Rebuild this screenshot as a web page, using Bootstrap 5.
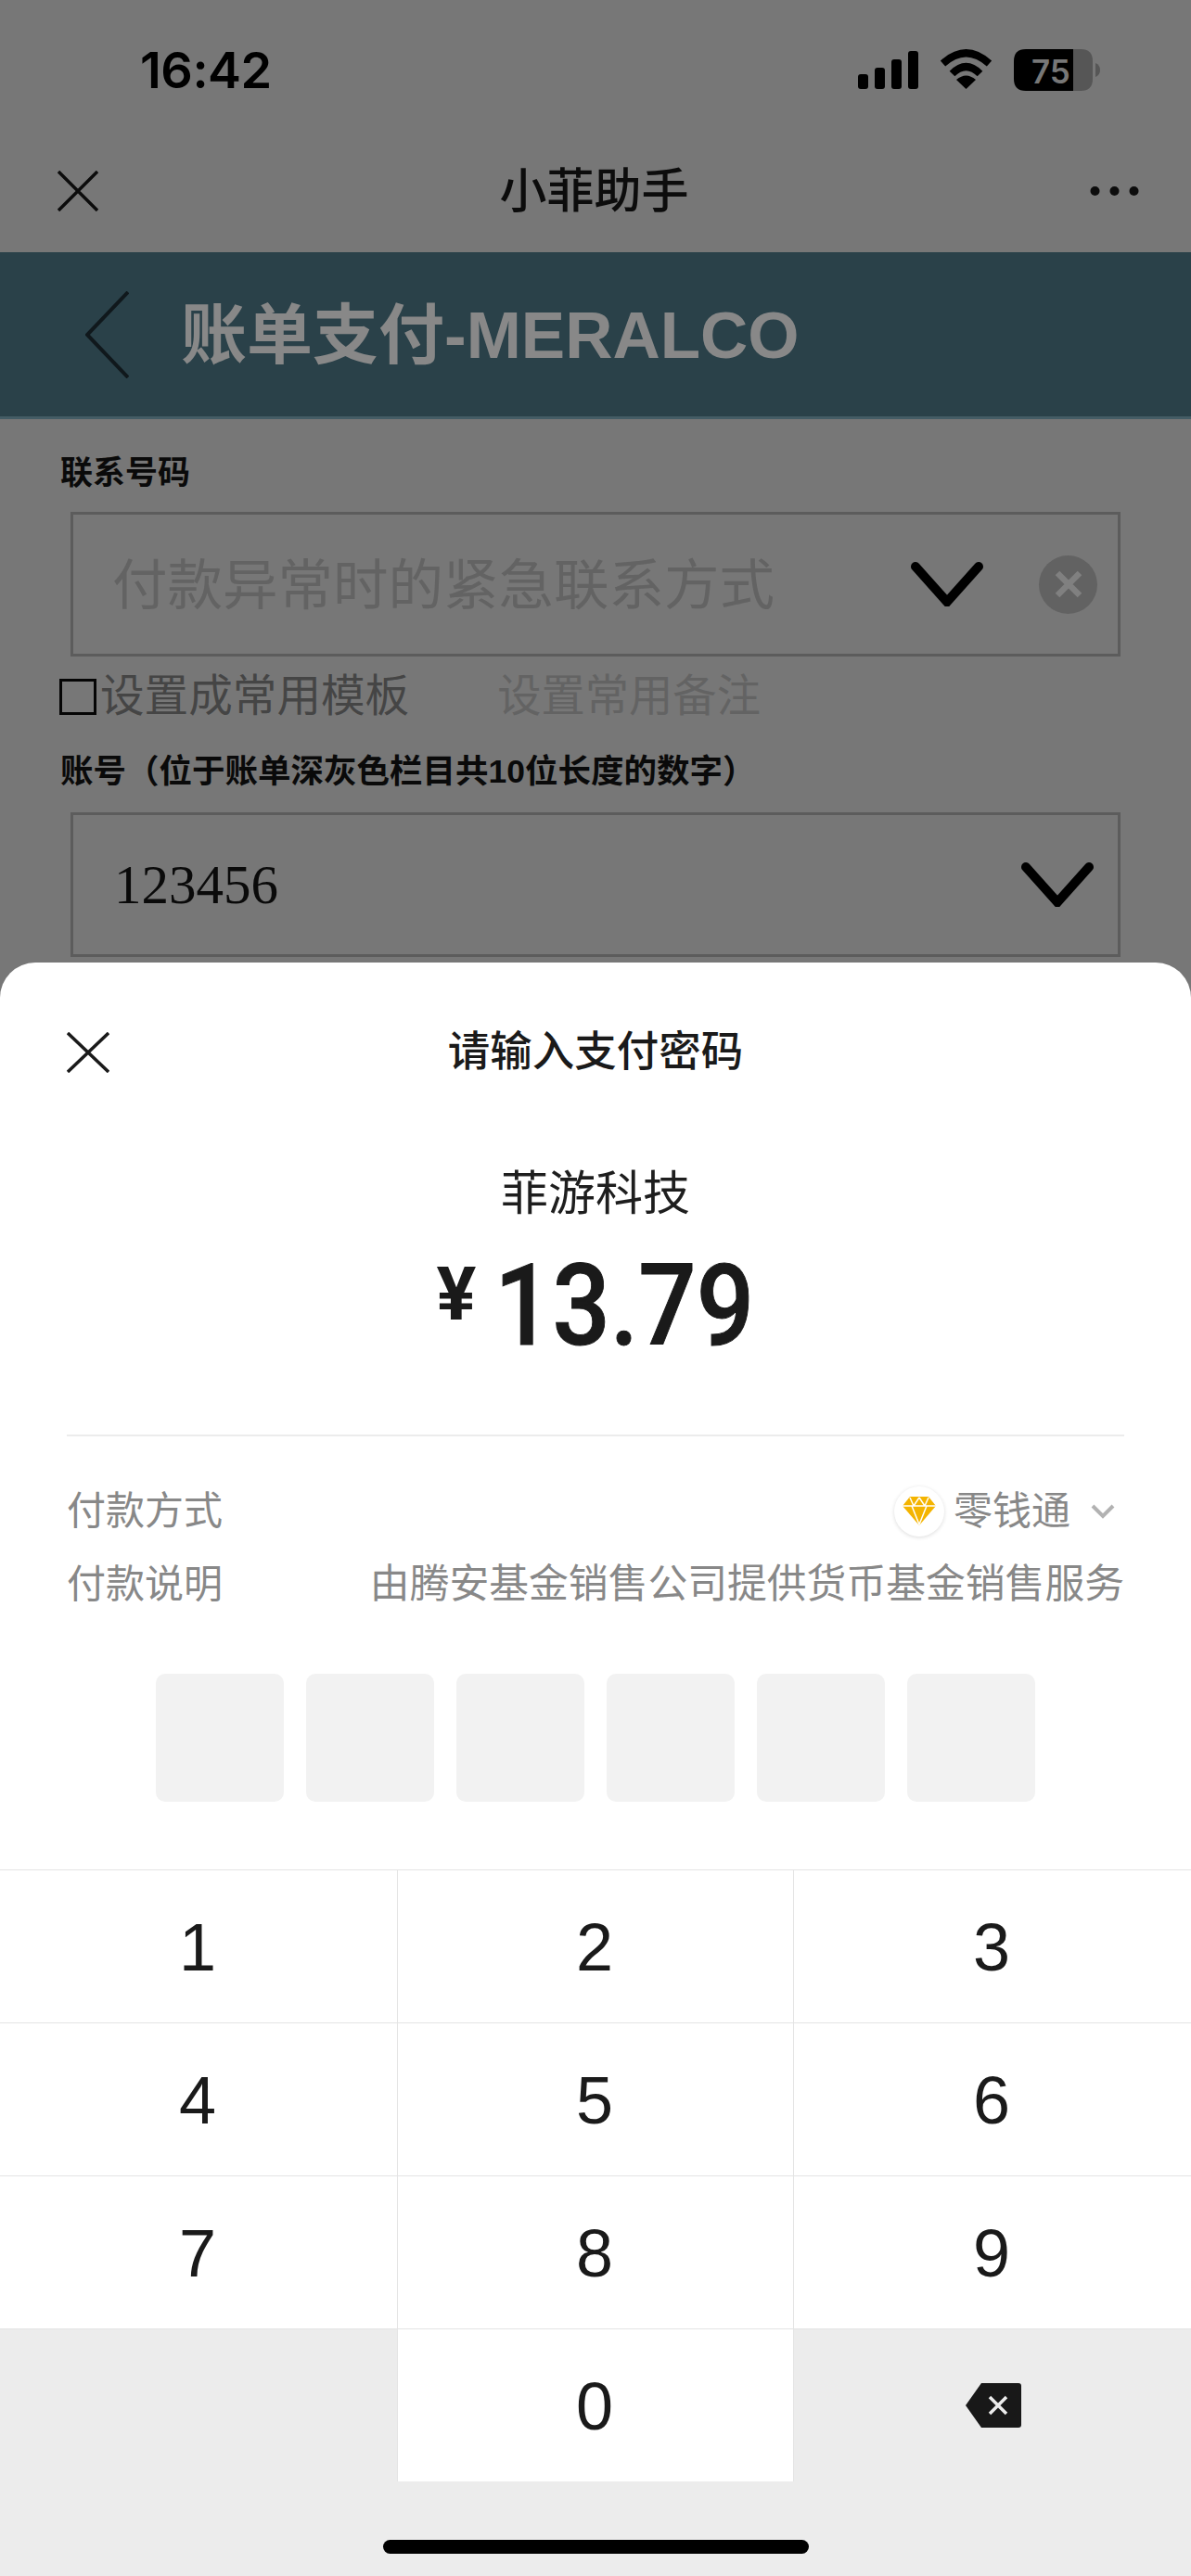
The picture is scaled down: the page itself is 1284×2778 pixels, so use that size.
<!DOCTYPE html>
<html lang="zh-CN">
<head>
<meta charset="utf-8">
<title>请输入支付密码</title>
<link href="https://cdn.jsdelivr.net/npm/bootstrap@5.3.0/dist/css/bootstrap.min.css" rel="stylesheet">
<style>
html,body{margin:0;background:#777;}
body{font-family:"Liberation Sans","Noto Sans CJK SC",sans-serif;}
.screen{width:1284px;height:2778px;overflow:hidden;background:#777;color:#000;}
.status-row{height:150px;padding:0 0 0 151px;}
.clock{font-family:Inter,"Liberation Sans",sans-serif;font-weight:600;font-size:54px;line-height:1;letter-spacing:-.5px;margin-top:1px;}
.status-svg{position:absolute;left:0;top:0;}
.nav-row{height:122px;padding:0 56px 10px 62px;}
.nav-title{font-size:51px;line-height:1;font-weight:500;color:#0c0c0c;}
.nav-left{width:120px;}
.nav-right{width:129px;}
.banner{height:180px;background:#2a4149;border-bottom:3px solid #445c65;padding-left:92px;gap:56px;}
.banner-title{font-size:71px;line-height:1;font-weight:700;color:#888;margin-top:2px;}
.form-wrap{padding:0 76px 0 65px;}
.field-label{font-size:35px;line-height:1;font-weight:700;color:#0a0a0a;white-space:nowrap;}
.label-a{padding-top:40px;height:100px;}
.label-b{font-size:35.500px;height:43px;margin-top:20px;margin-bottom:18px;}
.field-box{margin-left:11px;height:156px;border:3px solid #5c5c5c;}
.field-a{padding:0 22px 0 42px;}
.field-b{padding:0 26px 0 44px;}
.placeholder-txt{font-size:59.500px;line-height:1;color:#636363;white-space:nowrap;margin-top:3px;}
.value-txt{font-family:"Liberation Serif",serif;font-size:59px;line-height:1;color:#0a0a0a;}
.clear-dot{width:63px;height:63px;border-radius:50%;background:#626262;margin-left:60px;}
.tpl-row{height:87px;gap:4px;}
.tpl-check{width:40px;height:39px;border:3px solid #050505;flex:none;margin-left:-1px;}
.tpl-a{font-size:47.600px;line-height:1;color:#454545;white-space:nowrap;margin-top:-2px;}
.tpl-b{font-size:47.300px;line-height:1;color:#636363;margin-left:91px;white-space:nowrap;margin-top:-2px;}
.sheet{left:0;right:0;top:1038px;height:1740px;background:#fff;border-radius:38px 38px 0 0;overflow:hidden;color:#1a1a1a;}
.sheet-head{height:228px;padding-bottom:34px;}
.sheet-title{font-size:45.500px;font-weight:500;line-height:1;color:#1a1a1a;}
.sheet-x{left:72px;top:75px;}
.merchant{font-size:51px;line-height:1;text-align:center;color:#1e1e1e;margin-top:-4px;}
.amount{height:120px;margin-top:36px;gap:20px;}
.yen{font-family:Roboto,sans-serif;font-weight:700;font-size:80px;line-height:1;margin-top:-26px;}
.figure{display:inline-block;font-family:Roboto,sans-serif;font-weight:500;font-size:122px;line-height:1;transform:scaleX(.9);transform-origin:left center;margin-right:-31px;-webkit-text-stroke:1px #1a1a1a;}
.divider-line{margin:78px 72px 0;height:2px;background:#ececec;}
.info-row{height:79px;padding:0 72px;font-size:42px;line-height:1;color:#888;}
.info-first{margin-top:41px;}
.info-long{font-size:42.800px;}
.pay-way{gap:10px;margin-right:10px;}
.pay-chev{margin-left:10px;}
.pay-name{margin-right:2px;}
.gem-wrap{width:54px;height:54px;border-radius:50%;background:#fff;box-shadow:0 1px 4px rgba(0,0,0,.14);}
.pin-row{gap:24px;margin-top:57px;}
.pin-cell{width:138px;height:138px;background:#f2f2f2;border-radius:10px;}
.keypad{position:absolute;left:0;right:0;top:978px;bottom:0;background:#ececec;}
.key{height:165px;padding:2px 2px 0 0;font-size:72px;line-height:1;color:#1a1a1a;background:#fff;border-top:1px solid #e4e4e4;}
.key-mid{border-left:1px solid #e4e4e4;border-right:1px solid #e4e4e4;}
.key-plain{background:#ececec;}
.key-glyph{padding:0 0 0 2px;}
.grabber{left:413px;top:1701px;width:459px;height:15px;border-radius:8px;background:#000;}
</style>
</head>
<body>
<div class="screen position-relative">
  <div class="status-row d-flex align-items-center"><span class="clock">16:42</span></div>
  <svg class="status-svg" width="1284" height="150" viewBox="0 0 1284 150" aria-hidden="true">
    <rect x="925" y="80" width="11" height="16" rx="3"/>
    <rect x="943" y="73" width="11" height="23" rx="3"/>
    <rect x="961" y="64" width="11" height="32" rx="3"/>
    <rect x="979" y="55" width="11" height="41" rx="3"/>
    <path d="M1016.500 68.500Q1041.500 46 1066.500 68.500" fill="none" stroke="#000" stroke-width="8"/>
    <path d="M1026.500 79.500Q1041.500 64.500 1056.500 79.500" fill="none" stroke="#000" stroke-width="8"/>
    <path d="M1041.500 96L1031 86Q1041.500 77 1052 86Z"/>
    <path d="M1157 53H1165Q1178 53 1178 66V85Q1178 98 1165 98H1157Z" fill="#565656"/>
    <path d="M1157 53H1106Q1093 53 1093 66V85Q1093 98 1106 98H1157Z" fill="#000"/>
    <path d="M1181 68Q1186 70 1186 75.500Q1186 81 1181 83Z" fill="#565656"/>
    <text x="1112" y="90" font-family="Inter,sans-serif" font-weight="600" font-size="35" fill="#777">75</text>
  </svg>
  <div class="nav-row d-flex align-items-center justify-content-between">
    <div class="nav-left">
      <svg class="d-block" width="44" height="44" viewBox="0 0 44 44" aria-hidden="true"><path d="M1 1L43 43M43 1L1 43" stroke="#0c0c0c" stroke-width="3.500" fill="none"/></svg>
    </div>
    <div class="nav-title">小菲助手</div>
    <div class="nav-right d-flex justify-content-end">
      <svg width="53" height="12" viewBox="0 0 53 12" aria-hidden="true"><circle cx="5.500" cy="6" r="5" fill="#0c0c0c"/><circle cx="26.500" cy="6" r="5" fill="#0c0c0c"/><circle cx="47.500" cy="6" r="5" fill="#0c0c0c"/></svg>
    </div>
  </div>
  <div class="banner d-flex align-items-center">
    <svg width="47" height="94" viewBox="0 0 47 94" aria-hidden="true"><path d="M46 1L2 47L46 93" stroke="#10181c" stroke-width="4" fill="none"/></svg>
    <div class="banner-title">账单支付-MERALCO</div>
  </div>
  <div class="form-wrap">
    <div class="field-label label-a">联系号码</div>
    <div class="field-box field-a d-flex align-items-center justify-content-between">
      <div class="placeholder-txt flex-grow-1">付款异常时的紧急联系方式</div>
      <svg width="78" height="48" viewBox="0 0 78 48" aria-hidden="true"><path d="M5 5L39 43L73 5" stroke="#000" stroke-width="10" stroke-linecap="round" fill="none"/></svg>
      <div class="clear-dot d-flex align-items-center justify-content-center">
        <svg width="30" height="30" viewBox="0 0 30 30" aria-hidden="true"><path d="M3 3L27 27M27 3L3 27" stroke="#808080" stroke-width="6.500" fill="none"/></svg>
      </div>
    </div>
    <div class="tpl-row d-flex align-items-center">
      <div class="tpl-check"></div>
      <div class="tpl-a">设置成常用模板</div>
      <div class="tpl-b">设置常用备注</div>
    </div>
    <div class="field-label label-b">账号（位于账单深灰色栏目共10位长度的数字）</div>
    <div class="field-box field-b d-flex align-items-center justify-content-between">
      <div class="value-txt">123456</div>
      <svg width="78" height="48" viewBox="0 0 78 48" aria-hidden="true"><path d="M5 5L39 43L73 5" stroke="#000" stroke-width="10" stroke-linecap="round" fill="none"/></svg>
    </div>
  </div>
  <div class="sheet position-absolute">
    <div class="sheet-head d-flex align-items-center justify-content-center position-relative">
      <svg class="sheet-x position-absolute" width="46" height="44" viewBox="0 0 46 44" aria-hidden="true"><path d="M1 1L45 43M45 1L1 43" stroke="#1a1a1a" stroke-width="3.500" fill="none"/></svg>
      <div class="sheet-title">请输入支付密码</div>
    </div>
    <div class="merchant">菲游科技</div>
    <div class="amount d-flex align-items-center justify-content-center">
      <span class="yen">¥</span><span class="figure">13.79</span>
    </div>
    <div class="divider-line"></div>
    <div class="info-row info-first d-flex align-items-center justify-content-between">
      <span>付款方式</span>
      <span class="pay-way d-flex align-items-center">
        <span class="gem-wrap d-flex align-items-center justify-content-center">
          <svg width="36" height="31" viewBox="0 0 36 31" aria-hidden="true"><path d="M8 0H28L36 10L18 31L0 10Z" fill="#f4b400"/><path d="M0 10H36M10 10L18 30L26 10M8 1L12 10M28 1L24 10M18 1L12 10M18 1L24 10" stroke="#fff" stroke-width="1.500" fill="none"/></svg>
        </span>
        <span class="pay-name">零钱通</span>
        <svg class="pay-chev" width="26" height="16" viewBox="0 0 26 16" aria-hidden="true"><path d="M2 2L13 13L24 2" stroke="#b2b2b2" stroke-width="4" fill="none"/></svg>
      </span>
    </div>
    <div class="info-row d-flex align-items-center justify-content-between">
      <span>付款说明</span>
      <span class="info-long">由腾安基金销售公司提供货币基金销售服务</span>
    </div>
    <div class="pin-row d-flex justify-content-center">
      <div class="pin-cell"></div><div class="pin-cell"></div><div class="pin-cell"></div><div class="pin-cell"></div><div class="pin-cell"></div><div class="pin-cell"></div>
    </div>
    <div class="keypad">
      <div class="row g-0">
        <div class="col-4 key d-flex align-items-center justify-content-center">1</div>
        <div class="col-4 key key-mid d-flex align-items-center justify-content-center">2</div>
        <div class="col-4 key d-flex align-items-center justify-content-center">3</div>
        <div class="col-4 key d-flex align-items-center justify-content-center">4</div>
        <div class="col-4 key key-mid d-flex align-items-center justify-content-center">5</div>
        <div class="col-4 key d-flex align-items-center justify-content-center">6</div>
        <div class="col-4 key d-flex align-items-center justify-content-center">7</div>
        <div class="col-4 key key-mid d-flex align-items-center justify-content-center">8</div>
        <div class="col-4 key d-flex align-items-center justify-content-center">9</div>
        <div class="col-4 key key-plain"></div>
        <div class="col-4 key key-mid d-flex align-items-center justify-content-center">0</div>
        <div class="col-4 key key-plain key-glyph d-flex align-items-center justify-content-center">
          <svg width="60" height="48" viewBox="0 0 60 48" aria-hidden="true"><path d="M17 0H57Q60 0 60 3V45Q60 48 57 48H17L0 24Z" fill="#181818"/><path d="M26 15L44 33M44 15L26 33" stroke="#ececec" stroke-width="3.500" fill="none"/></svg>
        </div>
      </div>
    </div>
    <div class="grabber position-absolute"></div>
  </div>
</div>
<script src="https://cdn.jsdelivr.net/npm/bootstrap@5.3.0/dist/js/bootstrap.bundle.min.js"></script>
</body>
</html>
